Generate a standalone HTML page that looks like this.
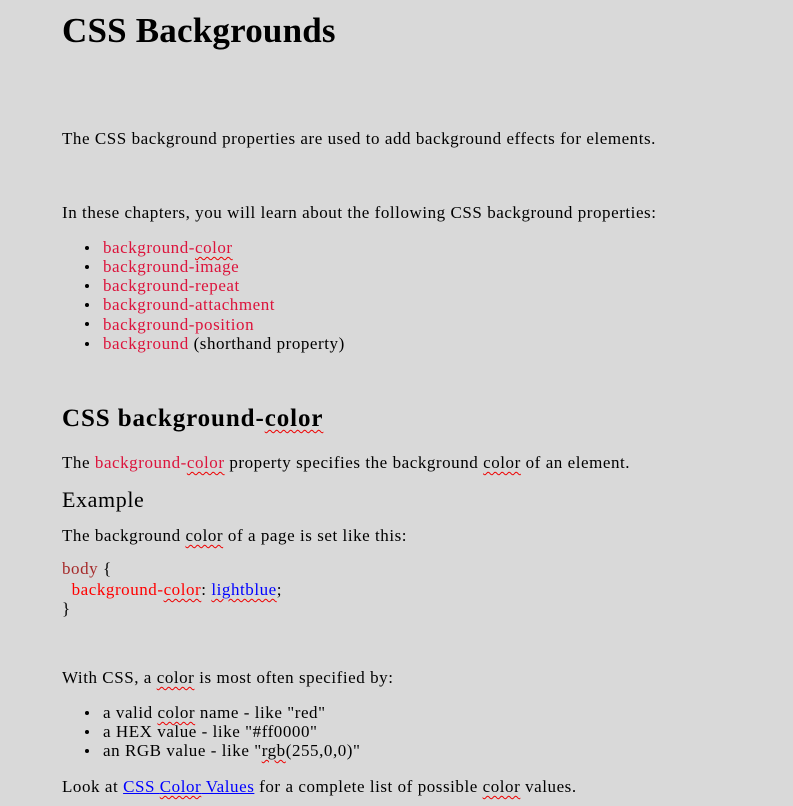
<!DOCTYPE html>
<html><head><meta charset="utf-8"><style>
html,body{margin:0;padding:0;background:#d9d9d9;width:793px;height:806px;overflow:hidden}
body{font-family:"Liberation Serif",serif;font-size:17px;letter-spacing:0.55px;color:#000;position:relative}
.l{position:absolute;left:62px;white-space:nowrap;line-height:20px}
.r{color:#dc143c}
.w{text-decoration:underline wavy #e00;text-decoration-thickness:1px;text-underline-offset:3px}
.b{position:absolute;left:85px;width:4px;height:4px;border-radius:50%;background:#000}
.li{left:103px}
</style></head><body>
<div class="l" style="top:9px;font-size:35px;line-height:44px;font-weight:bold;letter-spacing:0.2px">CSS Backgrounds</div>
<div class="l" style="top:129px">The CSS background properties are used to add background effects for elements.</div>
<div class="l" style="top:203px">In these chapters, you will learn about the following CSS background properties:</div>
<div class="b" style="top:246px"></div><div class="l li r" style="top:238px">background-<span class="w">color</span></div>
<div class="b" style="top:265px"></div><div class="l li r" style="top:257px">background-image</div>
<div class="b" style="top:284px"></div><div class="l li r" style="top:276px">background-repeat</div>
<div class="b" style="top:303px"></div><div class="l li r" style="top:295px">background-attachment</div>
<div class="b" style="top:322px"></div><div class="l li r" style="top:315px">background-position</div>
<div class="b" style="top:342px"></div><div class="l li" style="top:334px"><span class="r">background</span> (shorthand property)</div>
<div class="l" style="top:403px;font-size:25px;line-height:32px;font-weight:bold;letter-spacing:0.9px">CSS background-<span class="w">color</span></div>
<div class="l" style="top:453px">The <span class="r">background-<span class="w">color</span></span> property specifies the background <span class="w">color</span> of an element.</div>
<div class="l" style="top:487px;font-size:22px;line-height:26px;letter-spacing:0.6px">Example</div>
<div class="l" style="top:526px">The background <span class="w">color</span> of a page is set like this:</div>
<div class="l" style="top:559px"><span style="color:#a52a2a">body</span> {</div>
<div class="l" style="top:580px">&nbsp; <span style="color:#f00">background-<span class="w">color</span></span>: <span class="w" style="color:#00f">lightblue</span>;</div>
<div class="l" style="top:599px">}</div>
<div class="l" style="top:668px">With CSS, a <span class="w">color</span> is most often specified by:</div>
<div class="b" style="top:711px"></div><div class="l li" style="top:703px">a valid <span class="w">color</span> name - like "red"</div>
<div class="b" style="top:730px"></div><div class="l li" style="top:722px">a HEX value - like "#ff0000"</div>
<div class="b" style="top:749px"></div><div class="l li" style="top:741px">an RGB value - like "<span class="w">rgb</span>(255,0,0)"</div>
<div class="l" style="top:777px">Look at <span style="color:#00f;text-decoration:underline">CSS <span class="w">Color</span> Values</span> for a complete list of possible <span class="w">color</span> values.</div>
</body></html>
